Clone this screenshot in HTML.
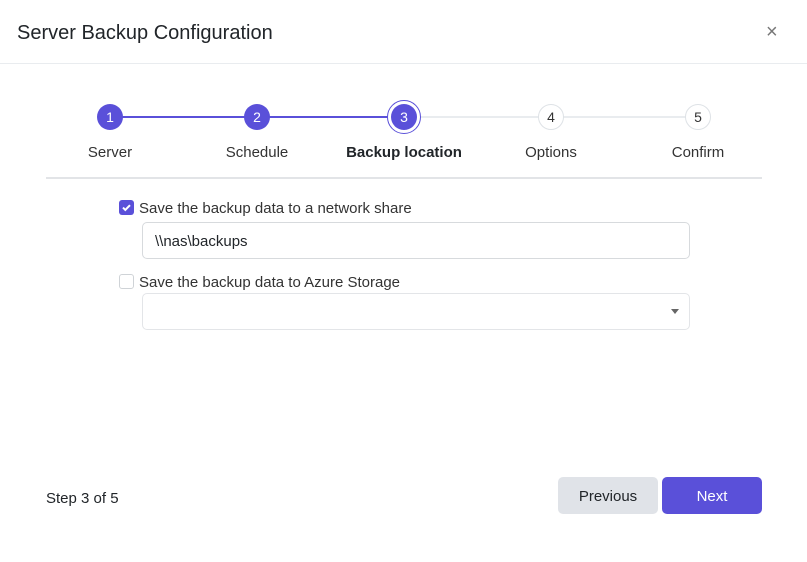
<!DOCTYPE html>
<html><head><style>
*{box-sizing:border-box;margin:0;padding:0}
body{width:807px;height:562px;background:#fff;font-family:"Liberation Sans",sans-serif;color:#212529;position:relative;overflow:hidden}
.abs{position:absolute}
.title{left:17px;top:22px;font-size:20px;color:#212529}
.close{left:766px;top:21px;font-size:20px;color:#777}
.hr1{left:0;top:63px;width:807px;height:1px;background:#e9ecef}
.line{top:116px;height:2px}
.c{width:26px;height:26px;border-radius:50%;font-size:14px;text-align:center;line-height:27px;top:104px}
.act{background:#5a50d9;color:#fff}
.ina{background:#fff;border:1px solid #dee2e6;color:#333;line-height:25px}
.lbl{top:144px;font-size:15px;color:#333;width:160px;text-align:center}
.hr2{left:46px;top:177px;width:716px;height:2px;background:#e2e4e7}
.cb{width:15px;height:15px;border-radius:3px}
.t{font-size:15px;color:#333}
.inp{border:1px solid #d7dadd;border-radius:5px;background:#fff}
.btn{width:100px;height:37px;border-radius:5px;font-size:15px;text-align:center;line-height:39px;top:477px}
</style></head><body>
<div class="abs title">Server Backup Configuration</div>
<div class="abs close">×</div>
<div class="abs hr1"></div>

<div class="abs line" style="left:110px;width:294px;background:#5a50d9"></div>
<div class="abs line" style="left:404px;width:294px;background:#e9ecef"></div>
<div class="abs c act" style="left:97px">1</div>
<div class="abs c act" style="left:244px">2</div>
<div class="abs" style="left:387px;top:100px;width:34px;height:34px;border-radius:50%;border:1.5px solid #5a50d9;background:#fff"></div>
<div class="abs c act" style="left:391px">3</div>
<div class="abs c ina" style="left:538px">4</div>
<div class="abs c ina" style="left:685px">5</div>
<div class="abs lbl" style="left:30px">Server</div>
<div class="abs lbl" style="left:177px">Schedule</div>
<div class="abs lbl" style="left:324px;font-weight:bold;color:#212529">Backup location</div>
<div class="abs lbl" style="left:471px">Options</div>
<div class="abs lbl" style="left:618px">Confirm</div>
<div class="abs hr2"></div>

<div class="abs cb" style="left:119px;top:200px;background:#5a50d9"><svg width="15" height="15" viewBox="0 0 15 15"><path d="M4 7.6l2.3 2.3L11 5.2" stroke="#fff" stroke-width="2" fill="none"/></svg></div>
<div class="abs t" style="left:139px;top:200px">Save the backup data to a network share</div>
<div class="abs inp" style="left:142px;top:222px;width:548px;height:37px"></div>
<div class="abs t" style="left:155px;top:233px;color:#212529">\\nas\backups</div>
<div class="abs cb" style="left:119px;top:274px;border:1px solid #cfd3d7;background:#fff"></div>
<div class="abs t" style="left:139px;top:274px">Save the backup data to Azure Storage</div>
<div class="abs inp" style="left:142px;top:293px;width:548px;height:37px;border-color:#e3e5e8"></div>
<div class="abs" style="left:671px;top:309px;width:0;height:0;border-left:4px solid transparent;border-right:4px solid transparent;border-top:5px solid #666"></div>

<div class="abs t" style="left:46px;top:490px;color:#212529">Step 3 of 5</div>
<div class="abs btn" style="left:558px;background:#e0e3e8;color:#212529">Previous</div>
<div class="abs btn" style="left:662px;background:#5a50d9;color:#fff">Next</div>
</body></html>
